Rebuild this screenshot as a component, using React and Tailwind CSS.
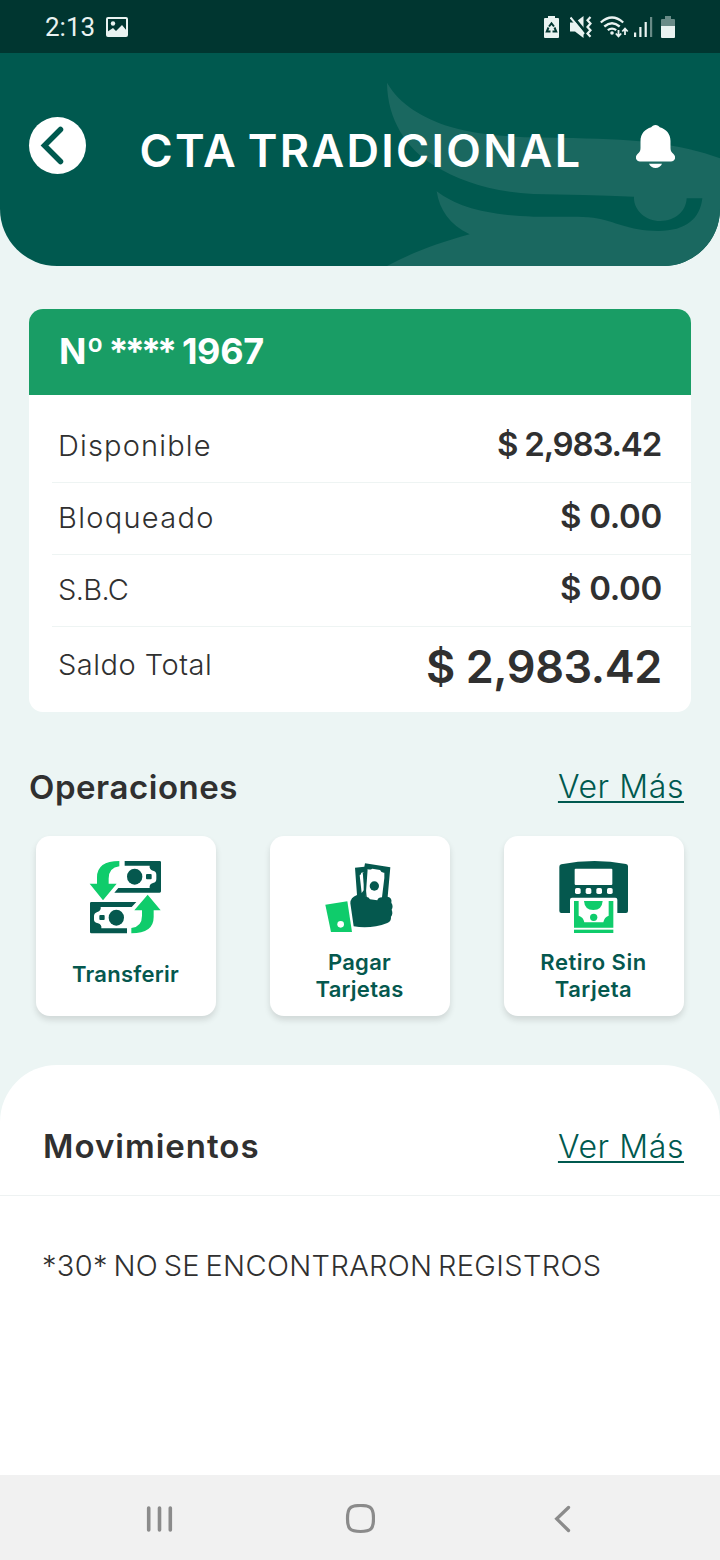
const balances = [
    { label: 'Disponible', amount: '$ 2,983.42', labelClass: 'tracking-[1.15px]', amountClass: 'tracking-[-1.2px] mr-[1px]' },
    { label: 'Bloqueado', amount: '$ 0.00', labelClass: 'tracking-[1.3px]', amountClass: 'tracking-[-0.3px]' },
    { label: 'S.B.C', amount: '$ 0.00', labelClass: 'tracking-[-0.6px]', amountClass: 'tracking-[-0.3px]' },
];

function StatusBar() {
    return (
        <div className="h-[53px] bg-[#003630] text-[#e9f3f1] flex items-center justify-between pl-[45px] pr-[45px]">
            <div className="flex items-center gap-[11px]">
                <span className="font-[Roboto,sans-serif] text-[26px] leading-none">2:13</span>
                <svg width="22" height="20" viewBox="0 0 22 20">
                    <rect x="1" y="1" width="20" height="18" rx="1" fill="none" stroke="currentColor" strokeWidth="2" />
                    <circle cx="7" cy="6.5" r="2.2" fill="currentColor" />
                    <path d="M1 15l6-4 3 3 6-6 5 6v5H1z" fill="currentColor" />
                </svg>
            </div>
            <div className="flex items-center">
                {/* battery protection */}
                <svg width="15" height="22" viewBox="0 0 15 22">
                    <path d="M4 0h7v2h3q1 0 1 1v18q0 1-1 1H1q-1 0-1-1V3q0-1 1-1h3z" fill="currentColor" />
                    <g fill="none" stroke="#003630" strokeWidth="2">
                        <path d="M5 10.500L7.500 7.300 10 10.500" />
                        <path d="M4.500 11.500L2.800 15.500H6.500" />
                        <path d="M10.500 11.500L12.200 15.500H8.500" />
                    </g>
                </svg>
                {/* muted + vibration */}
                <svg className="ml-[11px]" width="22" height="22" viewBox="0 0 22 22">
                    <path d="M0 6.500h5L13.500 0v22L5 15.500H0z" fill="currentColor" />
                    <path d="M1 -1.500L15 15.500" stroke="#003630" strokeWidth="3" />
                    <path d="M0.500 1.500L14 18" stroke="currentColor" strokeWidth="2" />
                    <path d="M20.500 1l-3 3.300 3 3.300-3 3.300 3 3.300-3 3.300 3 3.300" fill="none" stroke="currentColor" strokeWidth="2.200" />
                </svg>
                {/* wifi */}
                <svg className="ml-[8px]" width="29" height="22" viewBox="0 0 29 22">
                    <g fill="none" stroke="currentColor" strokeWidth="2.300">
                        <path d="M0.800 6.500Q12 -3.500 23.200 6.500" />
                        <path d="M4.300 10.500Q12 4 19.700 10.500" />
                        <path d="M7.800 14.200Q12 11 16.200 14.200" />
                    </g>
                    <circle cx="12" cy="17" r="1.800" fill="currentColor" />
                    <path d="M18.500 14v6M15.800 17.500l2.700 3 2.700-3M25 19v-6M22.300 15.500l2.700-3 2.700 3" fill="none" stroke="currentColor" strokeWidth="1.800" />
                </svg>
                {/* signal */}
                <svg className="ml-[5px]" width="19" height="20" viewBox="0 0 19 20" fill="currentColor">
                    <rect x="0" y="15.500" width="2.200" height="4.500" />
                    <rect x="5.300" y="10" width="2.200" height="10" />
                    <rect x="10.600" y="5" width="2.200" height="15" />
                    <rect x="16" y="0" width="2.200" height="20" opacity="0.450" />
                </svg>
                <svg className="ml-[8px]" width="14" height="22" viewBox="0 0 14 22" fill="currentColor">
                    <path d="M4 0h6v3h3q1 0 1 1v6H0V4q0-1 1-1h3z" opacity="0.450" />
                    <path d="M0 10h14v11q0 1-1 1H1q-1 0-1-1z" />
                </svg>
            </div>
        </div>
    );
}

function HeaderBird() {
    return (
        <svg className="absolute right-0 bottom-0" width="360" height="206" viewBox="0 0 1080 618" fill="#1a6860">
            <path d="M81 68C120 135 190 175 270 200C390 235 520 232 640 234C740 237 830 240 890 250C960 260 1020 273 1080 295V618H81C160 575 240 548 329 523C270 495 238 450 230 394C290 440 380 466 520 470C600 472 650 467 700 473C770 484 800 511 895 513C980 513 1020 475 1027 415H980C978 455 945 483 901 483C856 483 820 450 822 410C720 405 620 405 520 402C400 396 300 365 220 315C140 265 82 180 81 68Z" />
        </svg>
    );
}

function Header() {
    return (
        <header className="relative h-[213px] bg-[#00594f] rounded-b-[57px] overflow-hidden">
            <HeaderBird />
            <div className="relative flex items-start justify-between pl-[29px] pr-[45px] pt-[64px]">
                <button className="w-[57px] h-[57px] rounded-full bg-white flex items-center justify-center">
                    <svg width="57" height="57" viewBox="0 0 57 57" fill="none" stroke="#00594f" strokeWidth="5.500" strokeLinecap="round" strokeLinejoin="miter">
                        <path d="M31.500 12.500L15.500 28.500L31.500 44.500" />
                    </svg>
                </button>
                <h1 className="mt-[9px] text-[45px] leading-[50px] font-semibold text-white whitespace-nowrap tracking-[2.3px] [word-spacing:-4px]">CTA TRADICIONAL</h1>
                <svg className="mt-[8px]" width="39" height="43" viewBox="0 0 39 43" fill="white">
                    <path d="M19.500 0C21.500 0 23 1 23.800 2.300C30 4 34.500 9 34.500 16V23C34.500 26 35.500 27.500 37.500 29C39 30.500 39.500 32.500 38.800 34C38.200 35.500 37 36.500 35 36.500H4C2 36.500 .8 35.500 .2 34C-.5 32.500 0 30.500 1.500 29C3.500 27.500 4.500 26 4.500 23V16C4.500 9 9 4 15.200 2.300C16 1 17.500 0 19.500 0Z" />
                    <path d="M13 38.700H26C25 41.300 22.500 43 19.500 43S14 41.300 13 38.700Z" />
                </svg>
            </div>
        </header>
    );
}

function BalanceCard() {
    return (
        <section className="mx-[29px] mt-[43px] h-[403px] rounded-[14px] bg-white overflow-hidden">
            <div className="h-[86px] pl-[30px] pt-[22px] bg-[#199d65] text-white text-[36px] leading-[40px] font-bold">
                Nº<span className="tracking-[-3.9px]"> ****</span> <span className="tracking-[-0.3px]">1967</span>
            </div>
            <div className="pt-[16px]">
                {balances.map((b) => (
                    <div key={b.label} className="ml-[23px] h-[72px] pb-[3px] pl-[6px] pr-[29px] border-b border-[#eef4f3] flex items-center justify-between">
                        <span className={`text-[29px] leading-none font-light ${b.labelClass}`}>{b.label}</span>
                        <span className={`text-[33px] leading-none font-semibold mb-[1px] ${b.amountClass}`}>{b.amount}</span>
                    </div>
                ))}
                <div className="ml-[29px] mr-[29px] h-[78px] flex items-center justify-between">
                    <span className="text-[29px] leading-none font-light tracking-[0.5px] mb-[3px]">Saldo Total</span>
                    <span className="text-[45px] leading-none font-semibold tracking-[-0.4px]">$ 2,983.42</span>
                </div>
            </div>
        </section>
    );
}

function SectionTitle({ title, className, titleClass, linkClass }) {
    return (
        <div className={className}>
            <h2 className={`text-[33px] leading-[40px] font-semibold ${titleClass}`}>{title}</h2>
            <a className={`text-[32px] leading-[40px] font-light tracking-[0.6px] text-[#00594f] underline decoration-[1.5px] underline-offset-[3px] ${linkClass}`}>Ver Más</a>
        </div>
    );
}

function TransferIcon() {
    return (
        <svg className="mr-[2px]" width="90" height="95" viewBox="0 0 270 285">
            <path d="M134 33h105q4 0 4 4v87q0 4-4 4H103l12-14h94q-2-12 10-15q10-2 10-12V74q0-10-10-12q-12-4-10-15h-75z" fill="#05584e" />
            <ellipse cx="164" cy="80" rx="23" ry="24" fill="#05584e" />
            <rect x="198" y="72" width="17" height="16" rx="3" fill="#05584e" />
            <path d="M169 156H34q-4 0-4 4v86q0 4 4 4h107v-15H64q2-11-10-15q-12-3-12-11v-11q0-9 10-12q12-4 10-15h93z" fill="#05584e" />
            <ellipse cx="109" cy="203" rx="23" ry="24" fill="#05584e" />
            <rect x="58" y="195" width="16" height="15" rx="3" fill="#05584e" />
            <path d="M118 33v16q-32 4-32 37v15h24L69 151L29 101h22V82Q51 33 118 33z" fill="#0fcc6b" />
            <path d="M154 250v-16q32-4 32-37v-16h-23L203 134l39 47h-21v20Q221 250 154 250z" fill="#0fcc6b" />
        </svg>
    );
}

function PayIcon() {
    return (
        <svg width="90" height="95" viewBox="0 0 270 285">
            <path d="M120 53l28-3 2-10 76 12-8 88q14 3 11 18q7 10 1 21q5 12-2 21q1 14-11 19q-50 19-101 10L106 160q0-18 20-25z" fill="#05584e" />
            <path d="M158 57q6 4 14-1l23 4q4 9 13 8v16l-7 58q-12 0-14 9l-22-3q-4-9-13-8z" fill="white" />
            <path d="M134 76q4-2 5-8l7-1v54l-6 8z" fill="white" />
            <path d="M145 68L154 148" stroke="#05584e" strokeWidth="4" />
            <ellipse cx="178" cy="108" rx="14" ry="14" fill="#05584e" />
            <path d="M31 164l66-10 14 92H48z" fill="#0fcc6b" />
            <circle cx="77" cy="223" r="10" fill="white" />
        </svg>
    );
}

function AtmIcon() {
    return (
        <svg className="mr-[2px]" width="90" height="95" viewBox="0 0 270 285">
            <path d="M34 50q0-6 6-7Q137 24 234 42q6 1 6 7v134q0 6-6 6h-26v-40q0-6-6-6H72q-6 0-6 6v40H40q-6 0-6-6z" fill="#05584e" />
            <rect x="80" y="56" width="113" height="49" rx="3" fill="white" />
            <g fill="white">
                <rect x="81" y="114" width="17" height="18" rx="5" />
                <rect x="113" y="114" width="17" height="18" rx="5" />
                <rect x="145" y="114" width="17" height="18" rx="5" />
                <rect x="177" y="114" width="17" height="18" rx="5" />
            </g>
            <g fill="#0fcc6b">
                <path d="M78 153h14v44q14 4 17 20h57q3-16 16-20v-44h14v80H78z" />
                <path d="M108 153h56q-2 27-28 27t-28-27z" />
                <circle cx="137" cy="202" r="11" />
                <rect x="78" y="239" width="118" height="10" />
            </g>
        </svg>
    );
}

const operations = [
    { icon: <TransferIcon />, lines: ['Transferir'], textClass: 'h-[58px] tracking-[0.25px]' },
    { icon: <PayIcon />, lines: ['Pagar', 'Tarjetas'], textClass: 'h-[62px] tracking-[0.25px]' },
    { icon: <AtmIcon />, lines: ['Retiro Sin', 'Tarjeta'], textClass: 'h-[62px] tracking-[0.5px]' },
];

function NavBar() {
    return (
        <nav className="h-[85px] bg-[#f1f1f1] flex items-center pl-[146px] pt-[2px]">
            <svg width="28" height="28" viewBox="0 0 28 28" stroke="#8b8b8b" strokeWidth="3.600" strokeLinecap="round">
                <path d="M2.700 3v22M13.500 3v22M24.300 3v22" />
            </svg>
            <svg className="ml-[171px]" width="30" height="30" viewBox="0 0 30 30" fill="none" stroke="#8b8b8b" strokeWidth="3.200">
                <path d="M15.500 1.500C26 1.500 28.500 4 28.500 14.500S26 27.500 15.500 27.500S2.500 25 2.500 14.500S5 1.500 15.500 1.500Z" />
            </svg>
            <svg className="ml-[179px]" width="17" height="28" viewBox="0 0 17 28" fill="none" stroke="#8b8b8b" strokeWidth="3.300" strokeLinecap="round">
                <path d="M14.500 2.500L2.700 13.800l11.800 11.700" />
            </svg>
        </nav>
    );
}

export default function App() {
    return (
        <div className="w-[720px] h-[1560px] bg-[#ecf5f4] text-[#303030] font-[Inter,sans-serif] flex flex-col overflow-hidden">
            <StatusBar />
            <Header />
            <BalanceCard />

            <SectionTitle title="Operaciones" titleClass="tracking-[0.55px]" className="mt-[55px] pl-[29px] pr-[36px] flex justify-between" />
            <div className="mt-[29px] px-[36px] flex justify-between">
                {operations.map((op) => (
                    <div key={op.lines[0]} className="w-[180px] h-[180px] rounded-[14px] bg-white shadow-[0_4px_6px_rgba(0,0,0,0.12)] pt-[14px] flex flex-col items-center">
                        {op.icon}
                        <div className={`mr-[1px] flex flex-col justify-center text-center text-[22px] leading-[27px] font-semibold text-[#05584e] ${op.textClass}`}>
                            {op.lines.map((line) => <span key={line}>{line}</span>)}
                        </div>
                    </div>
                ))}
            </div>

            <section className="mt-[49px] flex-1 bg-white rounded-t-[57px]">
                <SectionTitle title="Movimientos" titleClass="tracking-[1px]" linkClass="mt-[1px]" className="h-[131px] pt-[61px] pl-[43px] pr-[36px] border-b border-[#eef2f2] flex items-start justify-between" />
                <p className="mt-[50px] pl-[42px] text-[29px] leading-[40px] font-light tracking-[0.35px] [word-spacing:-3px] whitespace-nowrap">*30* NO SE ENCONTRARON REGISTROS</p>
            </section>
            <NavBar />
        </div>
    );
}
